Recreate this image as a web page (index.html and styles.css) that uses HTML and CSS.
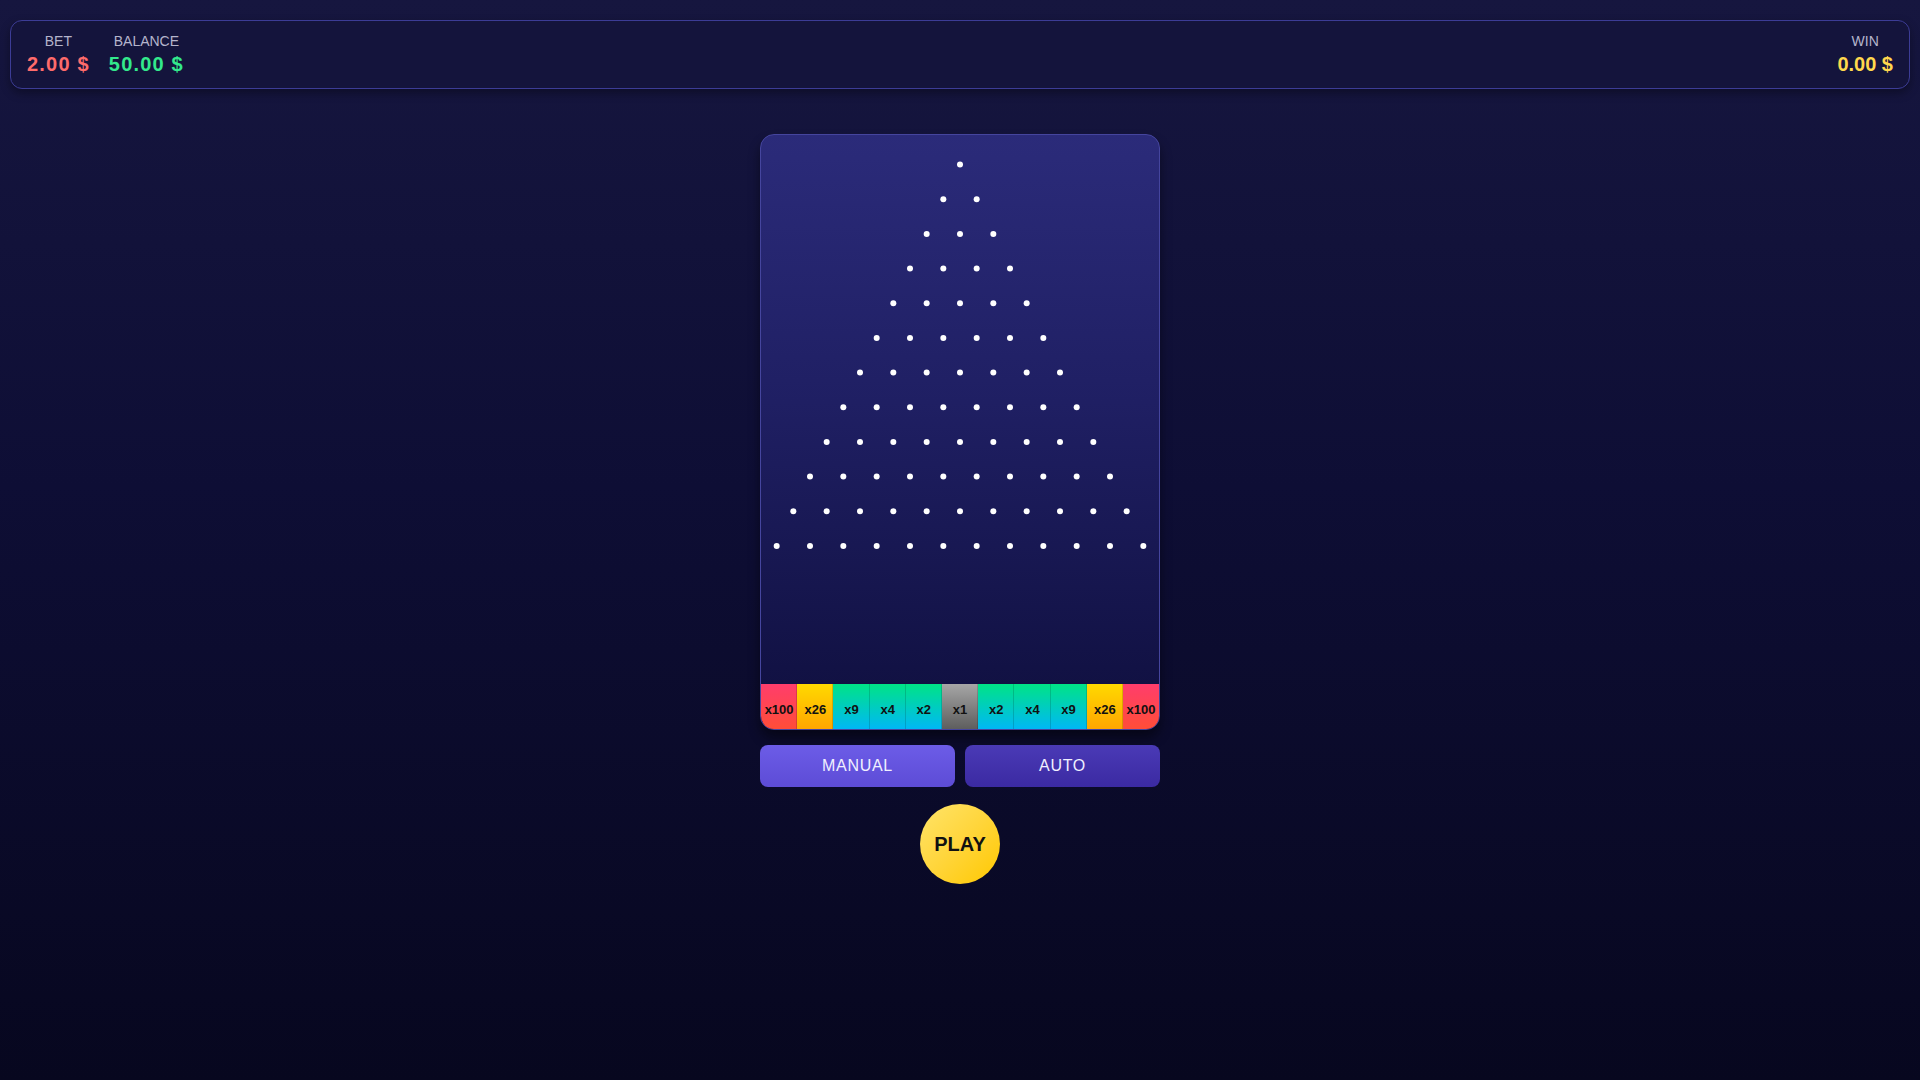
FILE: index.html
```html
<!DOCTYPE html>
<html lang="en">
<head>
<meta charset="utf-8">
<title>Plinko</title>
<link rel="stylesheet" href="styles.css">
</head>
<body>
<header class="topbar">
  <div class="stats">
    <div class="stat"><div class="stat-label">BET</div><div class="stat-value spaced bet">2.00 $</div></div>
    <div class="stat"><div class="stat-label">BALANCE</div><div class="stat-value spaced balance">50.00 $</div></div>
  </div>
  <div class="stat"><div class="stat-label">WIN</div><div class="stat-value win">0.00 $</div></div>
</header>
<main class="game">
  <div class="board">
    <svg class="pegs" width="398" height="549" viewBox="0 0 398 549">
      <g fill="#ffffff">
        <circle cx="199" cy="29.5" r="3"/>
        <circle cx="182.33" cy="64.2" r="3"/><circle cx="215.67" cy="64.2" r="3"/>
        <circle cx="165.67" cy="98.9" r="3"/><circle cx="199" cy="98.9" r="3"/><circle cx="232.33" cy="98.9" r="3"/>
        <circle cx="149" cy="133.5" r="3"/><circle cx="182.33" cy="133.5" r="3"/><circle cx="215.67" cy="133.5" r="3"/><circle cx="249" cy="133.5" r="3"/>
        <circle cx="132.33" cy="168.2" r="3"/><circle cx="165.67" cy="168.2" r="3"/><circle cx="199" cy="168.2" r="3"/><circle cx="232.33" cy="168.2" r="3"/><circle cx="265.67" cy="168.2" r="3"/>
        <circle cx="115.67" cy="202.9" r="3"/><circle cx="149" cy="202.9" r="3"/><circle cx="182.33" cy="202.9" r="3"/><circle cx="215.67" cy="202.9" r="3"/><circle cx="249" cy="202.9" r="3"/><circle cx="282.33" cy="202.9" r="3"/>
        <circle cx="99" cy="237.6" r="3"/><circle cx="132.33" cy="237.6" r="3"/><circle cx="165.67" cy="237.6" r="3"/><circle cx="199" cy="237.6" r="3"/><circle cx="232.33" cy="237.6" r="3"/><circle cx="265.67" cy="237.6" r="3"/><circle cx="299" cy="237.6" r="3"/>
        <circle cx="82.33" cy="272.3" r="3"/><circle cx="115.67" cy="272.3" r="3"/><circle cx="149" cy="272.3" r="3"/><circle cx="182.33" cy="272.3" r="3"/><circle cx="215.67" cy="272.3" r="3"/><circle cx="249" cy="272.3" r="3"/><circle cx="282.33" cy="272.3" r="3"/><circle cx="315.67" cy="272.3" r="3"/>
        <circle cx="65.67" cy="306.9" r="3"/><circle cx="99" cy="306.9" r="3"/><circle cx="132.33" cy="306.9" r="3"/><circle cx="165.67" cy="306.9" r="3"/><circle cx="199" cy="306.9" r="3"/><circle cx="232.33" cy="306.9" r="3"/><circle cx="265.67" cy="306.9" r="3"/><circle cx="299" cy="306.9" r="3"/><circle cx="332.33" cy="306.9" r="3"/>
        <circle cx="49" cy="341.6" r="3"/><circle cx="82.33" cy="341.6" r="3"/><circle cx="115.67" cy="341.6" r="3"/><circle cx="149" cy="341.6" r="3"/><circle cx="182.33" cy="341.6" r="3"/><circle cx="215.67" cy="341.6" r="3"/><circle cx="249" cy="341.6" r="3"/><circle cx="282.33" cy="341.6" r="3"/><circle cx="315.67" cy="341.6" r="3"/><circle cx="349" cy="341.6" r="3"/>
        <circle cx="32.33" cy="376.3" r="3"/><circle cx="65.67" cy="376.3" r="3"/><circle cx="99" cy="376.3" r="3"/><circle cx="132.33" cy="376.3" r="3"/><circle cx="165.67" cy="376.3" r="3"/><circle cx="199" cy="376.3" r="3"/><circle cx="232.33" cy="376.3" r="3"/><circle cx="265.67" cy="376.3" r="3"/><circle cx="299" cy="376.3" r="3"/><circle cx="332.33" cy="376.3" r="3"/><circle cx="365.67" cy="376.3" r="3"/>
        <circle cx="15.67" cy="411" r="3"/><circle cx="49" cy="411" r="3"/><circle cx="82.33" cy="411" r="3"/><circle cx="115.67" cy="411" r="3"/><circle cx="149" cy="411" r="3"/><circle cx="182.33" cy="411" r="3"/><circle cx="215.67" cy="411" r="3"/><circle cx="249" cy="411" r="3"/><circle cx="282.33" cy="411" r="3"/><circle cx="315.67" cy="411" r="3"/><circle cx="349" cy="411" r="3"/><circle cx="382.33" cy="411" r="3"/>
      </g>
    </svg>
    <div class="slots">
      <div class="slot red">x100</div>
      <div class="slot gold">x26</div>
      <div class="slot teal">x9</div>
      <div class="slot teal">x4</div>
      <div class="slot teal">x2</div>
      <div class="slot gray">x1</div>
      <div class="slot teal">x2</div>
      <div class="slot teal">x4</div>
      <div class="slot teal">x9</div>
      <div class="slot gold">x26</div>
      <div class="slot red">x100</div>
    </div>
  </div>
  <div class="modes">
    <button class="mode manual">MANUAL</button>
    <button class="mode auto">AUTO</button>
  </div>
  <button class="play">PLAY</button>
</main>
</body>
</html>
```
FILE: styles.css
```css
* { box-sizing: border-box; }
html, body { margin: 0; height: 100%; }
body {
  min-height: 1080px;
  padding: 20px 10px 0;
  font-family: "Liberation Sans", Arial, sans-serif;
  background: linear-gradient(180deg, #16163f 0%, #0e0e35 45%, #07071f 100%);
  color: #fff;
}
.topbar {
  display: flex;
  justify-content: space-between;
  align-items: flex-start;
  padding: 12px 16px 12px;
  background: #14143c;
  border: 1px solid #3c3c96;
  border-radius: 12px;
  box-shadow: 0 4px 10px rgba(0, 0, 0, 0.35);
}
.stats { display: flex; gap: 19px; }
.stat { display: flex; flex-direction: column; align-items: center; }
.stat-label {
  font-size: 14px;
  line-height: 16px;
  color: #b4b4cc;
  margin-bottom: 4px;
}
.stat-value {
  font-size: 20px;
  line-height: 23px;
  font-weight: bold;
}
.spaced { letter-spacing: 1.2px; }
.bet { color: #ff6b6b; }
.balance { color: #33e98c; }
.win { color: #ffd84d; }

.game {
  display: flex;
  flex-direction: column;
  align-items: center;
  margin-top: 45px;
}
.board {
  width: 400px;
  border: 1px solid #45459e;
  border-radius: 14px;
  overflow: hidden;
  background: linear-gradient(180deg, #2b2b7a 0%, #1f1f63 45%, #0f0f3e 100%);
  box-shadow: 0 8px 12px rgba(0, 0, 0, 0.45);
}
.pegs { display: block; }
.slots { display: flex; height: 45px; }
.slot {
  flex: 1;
  display: flex;
  align-items: center;
  justify-content: center;
  padding-top: 5px;
  font-size: 13px;
  font-weight: bold;
  color: #111;
  box-shadow: inset -1px 0 0 rgba(0, 0, 0, 0.15);
}
.slot:last-child { box-shadow: none; }
.red { background: linear-gradient(180deg, #ff3d6c, #ff4d38); }
.gold { background: linear-gradient(180deg, #ffd900, #ffa600); }
.teal { background: linear-gradient(180deg, #00e386, #00b8f5); }
.gray { background: linear-gradient(180deg, #a6a6a6, #5e5e5e); }

.modes {
  display: flex;
  gap: 10px;
  width: 400px;
  margin-top: 15px;
}
.mode {
  flex: 1;
  height: 42px;
  border: 0;
  border-radius: 8px;
  font-family: "Liberation Sans", Arial, sans-serif;
  font-size: 16px;
  letter-spacing: 0.7px;
  color: #f0f0ff;
  cursor: pointer;
}
.manual { background: linear-gradient(180deg, #6c5ce7, #5d4cd6); }
.auto { background: linear-gradient(180deg, #4a3ab6, #3b2aa2); }
.play {
  margin-top: 17px;
  width: 80px;
  height: 80px;
  border: 0;
  border-radius: 50%;
  background: linear-gradient(135deg, #ffe46a 0%, #ffd53a 50%, #ffc800 100%);
  font-family: "Liberation Sans", Arial, sans-serif;
  font-size: 20px;
  font-weight: bold;
  color: #111;
  cursor: pointer;
}
```
